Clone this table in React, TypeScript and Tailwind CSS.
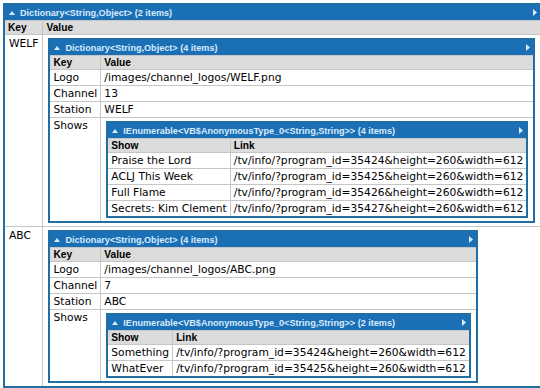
import React from "react";

type Show = { show: string; link: string };
type Station = { key: string; logo: string; channel: string; shows: Show[] };

const stations: Station[] = [
  {
    key: "WELF",
    logo: "/images/channel_logos/WELF.png",
    channel: "13",
    shows: [
      { show: "Praise the Lord", link: "/tv/info/?program_id=35424&height=260&width=612" },
      { show: "ACLJ This Week", link: "/tv/info/?program_id=35425&height=260&width=612" },
      { show: "Full Flame", link: "/tv/info/?program_id=35426&height=260&width=612" },
      { show: "Secrets: Kim Clement", link: "/tv/info/?program_id=35427&height=260&width=612" },
    ],
  },
  {
    key: "ABC",
    logo: "/images/channel_logos/ABC.png",
    channel: "7",
    shows: [
      { show: "Something", link: "/tv/info/?program_id=35424&height=260&width=612" },
      { show: "WhatEver", link: "/tv/info/?program_id=35425&height=260&width=612" },
    ],
  },
];

const tableCls = "border-2 border-[#1f6fa3] border-collapse my-[3px] mx-[2px]";
const cellCls = "border border-[#c6c6c6] px-[3px] py-0 align-top text-left whitespace-nowrap leading-[15px]";
const headCls =
  "border border-[#c6c6c6] bg-[#dcdcdc] px-[3px] py-0 h-[14px] text-left leading-[12px] font-bold text-[10.2px] [font-family:'Liberation_Sans',Arial,sans-serif]";

function TitleBar({ title }: { title: string }) {
  return (
    <tr>
      <td colSpan={2} className="bg-[#1b6fb5] p-0 h-[15px] border-0">
        <div className="flex items-center justify-between pl-[4px] pr-[3px] h-[15px]">
          <span className="flex items-center gap-[5px] text-[#d9ebfd] font-bold text-[9.1px] leading-[12px] [font-family:'Liberation_Sans',Arial,sans-serif]">
            <svg width="6" height="4" viewBox="0 0 6 4">
              <path d="M0 4L3 0L6 4Z" fill="#d9ebfd" />
            </svg>
            {title}
          </span>
          <svg width="4" height="7" viewBox="0 0 4 7">
            <path d="M0 0L4 3.5L0 7Z" fill="#d9ebfd" />
          </svg>
        </div>
      </td>
    </tr>
  );
}

function ShowsTable({ shows }: { shows: Show[] }) {
  return (
    <table className={tableCls}>
      <thead>
        <TitleBar title={`IEnumerable<VB$AnonymousType_0<String,String>> (${shows.length} items)`} />
        <tr>
          <th className={headCls}>Show</th>
          <th className={headCls}>Link</th>
        </tr>
      </thead>
      <tbody>
        {shows.map((s) => (
          <tr key={s.show}>
            <td className={cellCls}>{s.show}</td>
            <td className={cellCls}>{s.link}</td>
          </tr>
        ))}
      </tbody>
    </table>
  );
}

function StationTable({ st }: { st: Station }) {
  return (
    <table className={tableCls}>
      <thead>
        <TitleBar title="Dictionary<String,Object> (4 items)" />
        <tr>
          <th className={headCls}>Key</th>
          <th className={headCls}>Value</th>
        </tr>
      </thead>
      <tbody>
        <tr>
          <td className={cellCls}>Logo</td>
          <td className={cellCls}>{st.logo}</td>
        </tr>
        <tr>
          <td className={cellCls}>Channel</td>
          <td className={cellCls}>{st.channel}</td>
        </tr>
        <tr>
          <td className={cellCls}>Station</td>
          <td className={cellCls}>{st.key}</td>
        </tr>
        <tr>
          <td className={cellCls}>Shows</td>
          <td className={cellCls}>
            <ShowsTable shows={st.shows} />
          </td>
        </tr>
      </tbody>
    </table>
  );
}

export default function App() {
  return (
    <div className="w-[540px] h-[388px] bg-white text-black text-[10.7px] [font-family:'DejaVu_Sans',Verdana,sans-serif] overflow-hidden pl-[1px] pt-[1px]">
      <table className={tableCls + " !my-[2px]"}>
        <thead>
          <TitleBar title="Dictionary<String,Object> (2 items)" />
          <tr>
            <th className={headCls}>Key</th>
            <th className={headCls}>Value</th>
          </tr>
        </thead>
        <tbody>
          {stations.map((st) => (
            <tr key={st.key}>
              <td className={cellCls + " px-[4px] pt-[1px]"}>{st.key}</td>
              <td className={cellCls}>
                <StationTable st={st} />
              </td>
            </tr>
          ))}
        </tbody>
      </table>
    </div>
  );
}
